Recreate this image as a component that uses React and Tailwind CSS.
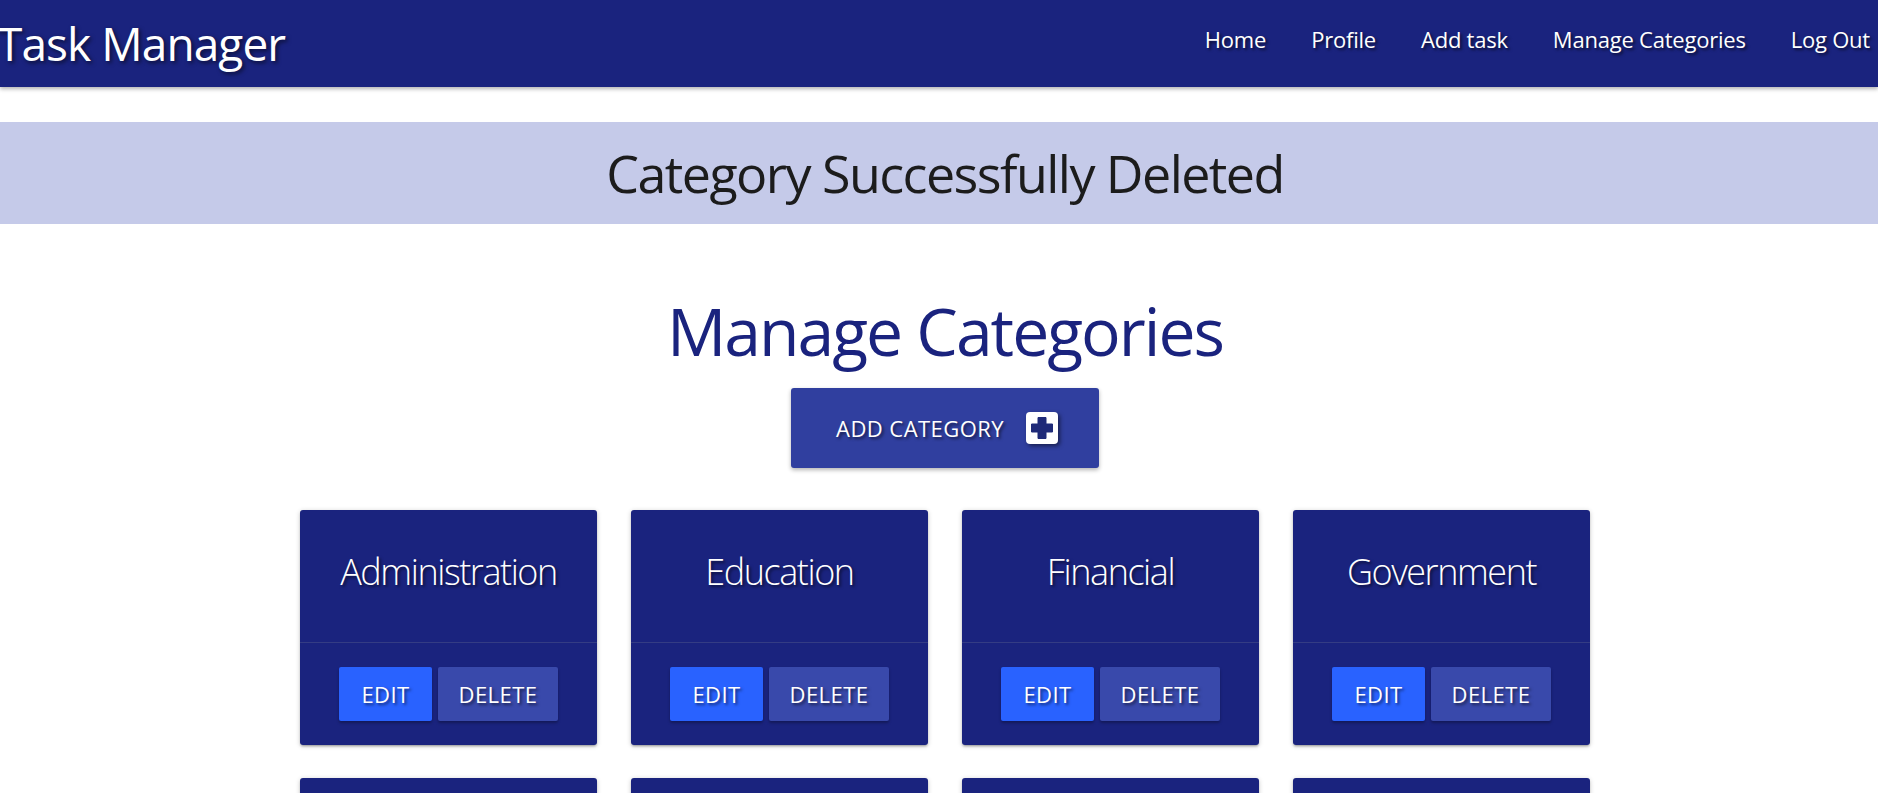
import React from "react";

const font = { fontFamily: '"Open Sans", "Noto Sans", sans-serif' };

function PlusSquare() {
  return (
    <svg width="32" height="32" viewBox="0 0 32 32" className="drop-shadow-[2px_2px_2px_rgba(0,0,0,0.5)]">
      <rect x="0" y="0" width="32" height="32" rx="4" fill="#ffffff" />
      <path
        d="M12 5.5 h8 v6.5 h6.5 v8 h-6.5 v6.5 h-8 v-6.5 h-6.5 v-8 h6.5 z"
        fill="#1f2a78"
        stroke="#1f2a78"
        strokeWidth="1"
        strokeLinejoin="round"
      />
    </svg>
  );
}

function Card({ name }) {
  return (
    <div className="flex h-[235px] w-[297px] flex-col rounded-[3px] bg-[#1a237e] shadow-[0_2px_2px_0_rgba(0,0,0,0.14),0_3px_1px_-2px_rgba(0,0,0,0.12),0_1px_5px_0_rgba(0,0,0,0.2)]">
      <div className="flex h-[132px] items-center justify-center pb-2">
        <span className="text-[36px] font-light tracking-[-0.04em] text-white [text-shadow:2px_2px_3px_rgba(0,0,0,0.55)]">
          {name}
        </span>
      </div>
      <div className="h-px bg-[rgba(160,160,160,0.2)]" />
      <div className="flex flex-1 items-center justify-center gap-[6px]">
        <button className="h-[54px] w-[93px] rounded-[2px] bg-[#2962ff] text-[22px] tracking-[0.02em] text-white shadow-[0_2px_3px_rgba(0,0,0,0.3)] [text-shadow:2px_2px_3px_rgba(0,0,0,0.55)]">
          EDIT
        </button>
        <button className="h-[54px] w-[120px] rounded-[2px] bg-[#3949ab] text-[22px] tracking-[0.02em] text-white shadow-[0_2px_3px_rgba(0,0,0,0.3)] [text-shadow:2px_2px_3px_rgba(0,0,0,0.55)]">
          DELETE
        </button>
      </div>
    </div>
  );
}

export default function App() {
  const row1 = ["Administration", "Education", "Financial", "Government"];
  const row2 = ["Health", "Household", "Personal", "Work"];
  return (
    <div style={font} className="h-[793px] overflow-hidden bg-white">
      <nav className="relative z-10 flex h-[87px] items-center justify-between bg-[#1a237e] shadow-[0_2px_4px_rgba(0,0,0,0.3)]">
        <span className="ml-[-3px] text-[46px] tracking-[-0.02em] text-white [text-shadow:2px_2px_4px_rgba(0,0,0,0.6)]">
          Task Manager
        </span>
        <ul className="mr-[8px] flex items-center gap-[45px] pb-[8px] text-[22px] tracking-[-0.01em] text-white [text-shadow:2px_2px_3px_rgba(0,0,0,0.6)]">
          <li>Home</li>
          <li>Profile</li>
          <li>Add task</li>
          <li>Manage Categories</li>
          <li>Log Out</li>
        </ul>
      </nav>

      <div className="mt-[35px] flex h-[102px] items-center justify-center bg-[#c5cae9] pl-3">
        <span className="text-[52px] tracking-[-0.03em] text-[#1c1c1c]">Category Successfully Deleted</span>
      </div>

      <main className="flex flex-col items-center pl-3">
        <h1 className="mt-[64px] text-[66px] leading-[84px] tracking-[-0.03em] text-[#1a237e]">Manage Categories</h1>
        <button className="mt-[16px] flex h-[80px] w-[308px] items-center justify-center gap-[22px] rounded-[3px] bg-[#303f9f] pl-[4px] text-[22px] tracking-[0.02em] text-white shadow-[0_2px_4px_rgba(0,0,0,0.3)] [text-shadow:2px_2px_3px_rgba(0,0,0,0.55)]">
          <span>ADD CATEGORY</span>
          <PlusSquare />
        </button>

        <div className="mt-[42px] grid grid-cols-[repeat(4,297px)] gap-x-[34px] gap-y-[33px]">
          {row1.concat(row2).map((n) => (
            <Card key={n} name={n} />
          ))}
        </div>
      </main>
    </div>
  );
}
